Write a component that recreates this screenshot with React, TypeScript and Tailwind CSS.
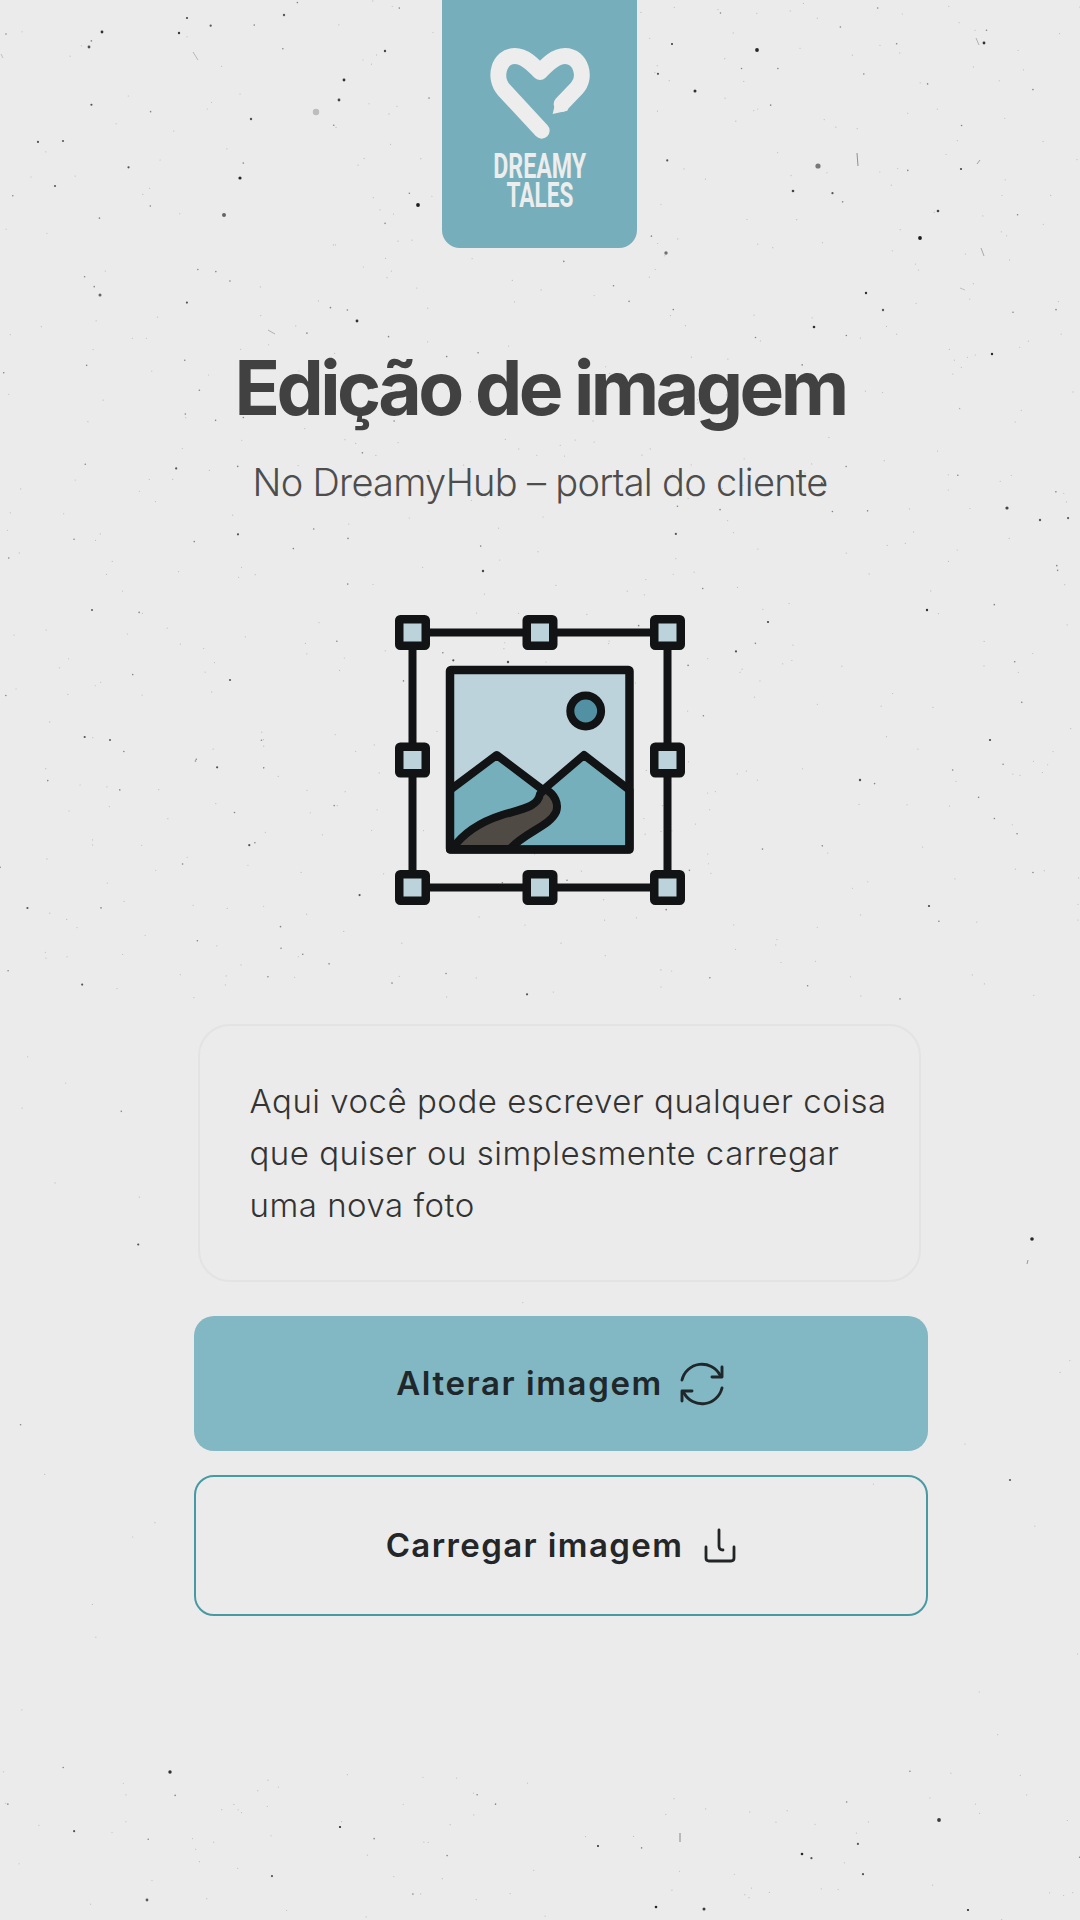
import React from "react";

function makeSpecks() {
  let s = 12345;
  const r = () => {
    s = (s * 1664525 + 1013904223) % 4294967296;
    return s / 4294967296;
  };
  const out: { x: number; y: number; r: number; o: number }[] = [];
  for (let i = 0; i < 1300; i++) {
    const x = r() * 1080;
    const y = r() * 1920;
    const keep = y < 1000 || y > 1770 ? 1 : x < 190 || x > 930 ? 0.14 : 0.02;
    const big = r();
    const pick = r();
    if (pick > keep) continue;
    out.push({
      x,
      y,
      r: big > 0.95 ? 1.1 : big > 0.75 ? 0.8 : 0.6,
      o: big > 0.95 ? 0.75 : big > 0.75 ? 0.5 : 0.22,
    });
  }
  return out;
}
const specks = makeSpecks();

const marks: [number, number, number, number][] = [
  [102, 32, 1.4, 0.9], [89, 47, 1.4, 0.75], [179, 33, 1.2, 0.85], [187, 18, 1.1, 0.8], [284, 15, 1.2, 0.7],
  [344, 80, 1.4, 0.9], [339, 100, 1.4, 0.8], [316, 112, 3.2, 0.22], [240, 178, 1.6, 0.95], [224, 215, 2, 0.65],
  [418, 205, 1.9, 1], [357, 321, 1.4, 0.9], [100, 295, 1.5, 0.65], [251, 119, 1.2, 0.75], [385, 51, 1.2, 0.8],
  [55, 186, 1.1, 0.7], [63, 141, 1.1, 0.7], [757, 50, 1.9, 0.95], [695, 91, 1.5, 0.9], [818, 166, 2.6, 0.55],
  [920, 238, 1.9, 1], [984, 43, 1.4, 0.9], [793, 191, 1.3, 0.8], [938, 211, 1.3, 0.8], [666, 253, 1.7, 0.6],
  [814, 327, 1.3, 0.9], [992, 354, 1.2, 0.95], [866, 293, 1.2, 0.9], [883, 310, 1.2, 0.7], [961, 169, 1.1, 0.8],
  [672, 44, 1, 0.9], [170, 1772, 1.7, 0.9], [939, 1820, 1.9, 0.85], [802, 1854, 1.3, 0.95], [704, 1909, 1.5, 0.85],
  [656, 1907, 1.3, 0.95], [340, 1827, 1.1, 0.95], [598, 1846, 1, 0.95], [968, 1910, 1.1, 0.95], [147, 1900, 1.4, 0.7],
  [1032, 1239, 1.8, 0.95], [1007, 508, 1.6, 0.8], [927, 610, 1.2, 0.9], [929, 906, 1.1, 0.8], [1040, 520, 1.2, 0.7],
  [508, 662, 1.2, 0.75], [483, 571, 1.2, 0.8], [768, 622, 1.1, 0.8], [92, 610, 1, 0.7], [110, 740, 1, 0.7],
  [230, 680, 1.1, 0.7], [860, 780, 1.2, 0.75], [990, 740, 1.1, 0.8], [1010, 1480, 1.1, 0.7],
];

const lines: [number, number, number, number, number][] = [
  [1, 54, 3, 58, 0.25], [193, 52, 198, 60, 0.3], [268, 330, 275, 334, 0.35], [857, 153, 858, 166, 0.55],
  [976, 38, 979, 45, 0.35], [980, 160, 977, 164, 0.45], [981, 248, 984, 256, 0.4], [680, 1833, 680, 1842, 0.6],
  [960, 288, 965, 290, 0.25], [1028, 1260, 1027, 1264, 0.5],
];

function Logo() {
  return (
    <svg viewBox="0 0 195 248" className="h-[248px] w-[195px]">
      <g transform="translate(-12 0) scale(0.3333)">
        <path
          d="M335 392 L222 270 C190 235 205 168 255 168 C285 168 310 195 330 216 C350 195 375 168 405 168 C455 168 470 235 440 265 L395 312"
          fill="none"
          stroke="#ecedec"
          strokeWidth="48"
          strokeLinecap="round"
          strokeLinejoin="round"
        />
        <path d="M378 300 L368 342 L412 332 L425 300 Z" fill="#ecedec" />
      </g>
      <g fill="#ecedec" fontFamily="Roboto, sans-serif" fontWeight="700" textAnchor="middle">
        <text x="97.7" y="178" fontSize="35" textLength="93" lengthAdjust="spacingAndGlyphs">DREAMY</text>
        <text x="98" y="207" fontSize="35" textLength="67" lengthAdjust="spacingAndGlyphs">TALES</text>
      </g>
    </svg>
  );
}

function Handle({ x, y }: { x: number; y: number }) {
  return <rect x={x - 13.25} y={y - 13.25} width="26.5" height="26.5" rx="1" fill="#bcd3db" stroke="#121314" strokeWidth="8.5" strokeLinejoin="round" />;
}

function EditIcon() {
  const p = [32.5, 160, 287.5];
  return (
    <svg viewBox="0 0 320 320" className="h-[320px] w-[320px]">
      <path d="M32.5 32.5H287.5V287.5H32.5Z" fill="none" stroke="#121314" strokeWidth="8" />
      {p.map((y) =>
        p.map((x) => (x === 160 && y === 160 ? null : <Handle key={`${x}-${y}`} x={x} y={y} />)),
      )}
      <rect x="70" y="70" width="179.5" height="179.5" fill="#bcd3db" />
      <path d="M70 190 L116.7 155 L163 190 L204 155 L249.5 190 V249.5 H70 Z" fill="#75afbc" stroke="#121314" strokeWidth="8" strokeLinejoin="round" />
      <path
        d="M72 249 C84 232 100 222 122 215 C142 209 158 207 160 194 L165 189 C175 194 179 204 176 212 C170 226 145 232 130 249 Z"
        fill="#504a45"
        stroke="#121314"
        strokeWidth="8"
        strokeLinejoin="round"
      />
      <rect x="70" y="70" width="179.5" height="179.5" rx="1" fill="none" stroke="#121314" strokeWidth="8.5" strokeLinejoin="round" />
      <circle cx="205.7" cy="111" r="15.4" fill="#5291a3" stroke="#121314" strokeWidth="8" />
    </svg>
  );
}

function RefreshIcon() {
  return (
    <svg viewBox="0 0 48 48" className="h-[48px] w-[48px]" fill="none" stroke="#1f272b" strokeWidth="2.9" strokeLinecap="round" strokeLinejoin="round">
      <path d="M4 20 A20.5 20.5 0 0 1 42 15" />
      <path d="M44 7 V17 H34" />
      <path d="M44 28 A20.5 20.5 0 0 1 6 33" />
      <path d="M4 41 V31 H14" />
    </svg>
  );
}

function UploadTray() {
  return (
    <svg viewBox="0 0 32 36" className="h-[36px] w-[32px]" fill="none" stroke="#222526" strokeWidth="2.8" strokeLinecap="round" strokeLinejoin="round">
      <path d="M15 2 V18 Q15 22 19 22" />
      <path d="M2 19 V30 Q2 33 5 33 H27 Q30 33 30 30 V19" />
    </svg>
  );
}

export default function App() {
  return (
    <div
      className="relative flex h-[1920px] w-[1080px] flex-col items-center overflow-hidden bg-[#ebebeb]"
      style={{ fontFamily: "Inter, 'Liberation Sans', sans-serif" }}
    >
      <svg viewBox="0 0 1080 1920" className="absolute inset-0 h-full w-full">
        {specks.map((d, i) => (
          <circle key={i} cx={d.x} cy={d.y} r={d.r} fill="#222" opacity={d.o} />
        ))}
        {marks.map(([x, y, r, o], i) => (
          <circle key={`m${i}`} cx={x} cy={y} r={r} fill="#1c1c1c" opacity={o} />
        ))}
        {lines.map(([x1, y1, x2, y2, o], i) => (
          <line key={`l${i}`} x1={x1} y1={y1} x2={x2} y2={y2} stroke="#333" strokeWidth="0.9" opacity={o} />
        ))}
      </svg>
      <div className="relative flex w-full flex-col items-center">
        <div className="mr-[2px] h-[248px] w-[195px] overflow-hidden rounded-b-[18px] bg-[#76aebb]">
          <Logo />
        </div>
        <h1 className="mt-[90px] text-[75px] leading-[100px] font-bold tracking-[-3.55px] text-[#414141]">Edição de imagem</h1>
        <p className="mt-[20px] text-[38px] leading-[48px] font-light tracking-[-0.7px] text-[#4d4d4d]">No DreamyHub – portal do cliente</p>
        <div className="mt-[94px]">
          <EditIcon />
        </div>
        <div className="mt-[104px] ml-[38px] flex h-[258px] w-[723px] items-center rounded-[32px] border-2 border-[#e3e3e3] bg-[#ebebeb] pl-[50px] text-[33px] leading-[52px] font-light tracking-[0.5px] text-[#333]">
          <p>
            Aqui você pode escrever qualquer coisa
            <br />
            que quiser ou simplesmente carregar
            <br />
            uma nova foto
          </p>
        </div>
        <div className="mt-[34px] ml-[42px] flex w-[734px] flex-col gap-[24px]">
          <div className="flex h-[135px] items-center justify-center gap-[15px] rounded-[20px] bg-[#82b7c4] text-[33px] font-semibold tracking-[1.6px] text-[#1f272b]">
            Alterar imagem
            <RefreshIcon />
          </div>
          <div className="flex h-[141px] items-center justify-center gap-[21px] rounded-[20px] border-[2.5px] border-[#479aa3] text-[33px] font-semibold tracking-[1.4px] text-[#242627]">
            Carregar imagem
            <UploadTray />
          </div>
        </div>
      </div>
    </div>
  );
}
